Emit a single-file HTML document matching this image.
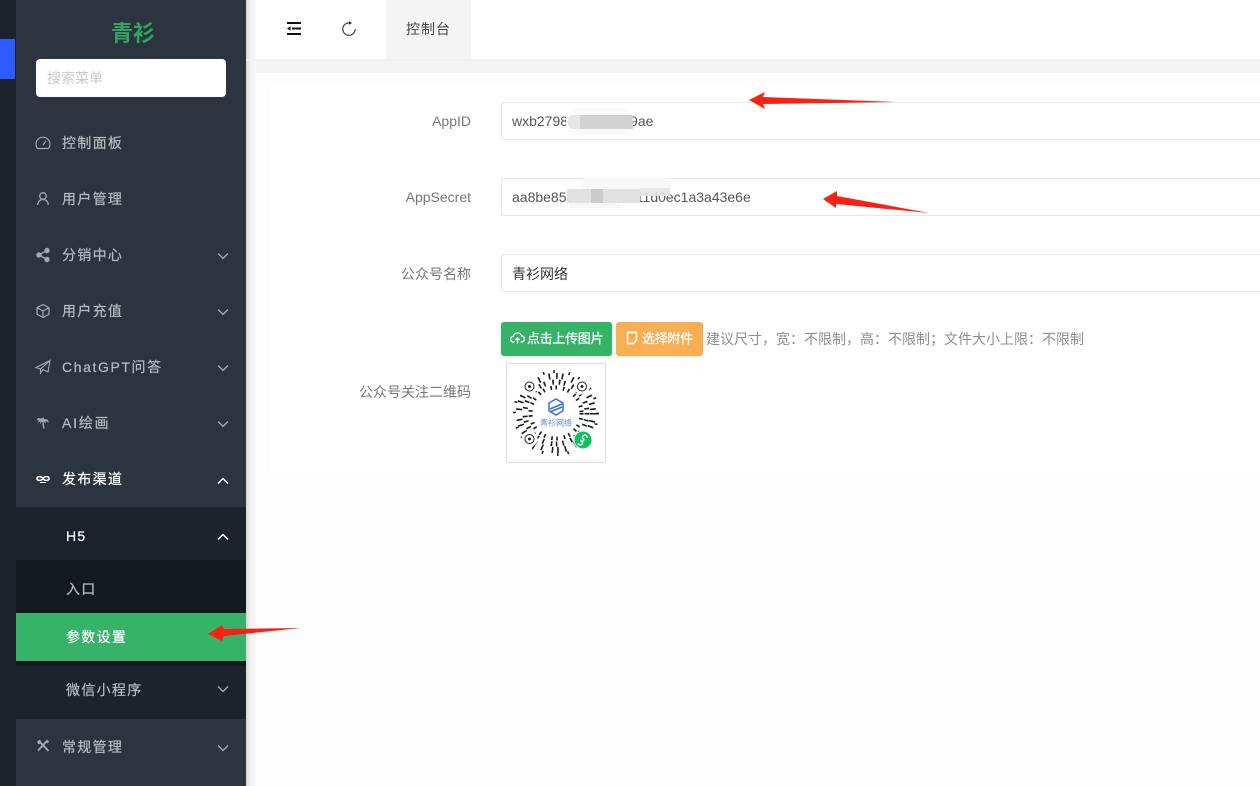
<!DOCTYPE html>
<html lang="zh"><head><meta charset="utf-8"><title>青衫</title>
<style>
*{box-sizing:border-box}
html,body{margin:0;padding:0}
body{width:1260px;height:786px;overflow:hidden;position:relative;background:#fdfdfd;font-family:"Liberation Sans","Noto Sans CJK SC",sans-serif;font-size:14px}
.a{position:absolute}
#rail{left:0;top:0;width:16px;height:786px;background:#1b222c}
#side{left:16px;top:0;width:230px;height:786px;background:#2b343f}
#shadow{left:246px;top:0;width:10px;height:786px;background:linear-gradient(90deg,#d8d8d8,#f0f0f0 40%,#f8f8f8)}
.m{position:absolute;left:16px;width:230px;height:20px;line-height:20px;color:#b8bcc0;letter-spacing:1.3px;white-space:nowrap;-webkit-text-stroke:.2px}
.m span{position:absolute;left:46px;top:0}
.m svg.i{position:absolute;left:19px;top:2px}
.m svg.c{position:absolute;left:200px;top:4px}
.w{color:#fff}
.lab{position:absolute;width:216px;left:255px;text-align:right;color:#777;line-height:20px;white-space:nowrap}
.inp{position:absolute;left:501px;width:780px;height:38px;border:1px solid #e8e8e8;border-radius:2px;background:#fff;color:#555;line-height:37px;padding-left:10px;white-space:nowrap}
.btn{position:absolute;top:322px;height:34px;border-radius:3px;color:#fff;font-size:13px;letter-spacing:-.3px;line-height:33px;white-space:nowrap;box-shadow:0 1px 2px rgba(0,0,0,.1);-webkit-text-stroke:.25px}
</style></head><body>
<div class="a" id="rail"></div>
<div class="a" style="left:0;top:39px;width:15px;height:40px;background:#2c5cff"></div>
<div class="a" id="side"></div>

<div class="a" style="left:16px;top:19px;width:234px;text-align:center;color:#2fa55f;font-size:22px;font-weight:700;line-height:30px">青衫</div>
<div class="a" style="left:36px;top:59px;width:190px;height:38px;background:#fff;border-radius:4px;color:#c8c8c8;line-height:39px;padding-left:11px">搜索菜单</div>

<div class="m" style="top:133px"><svg class="i" width="16" height="16" viewBox="0 0 16 16" fill="none" stroke="#a3aab2" stroke-width="1.200"><path d="M2.500 13.500A7 7 0 1 1 13.500 13.500Z"/><path d="M8 10L11 6"/></svg><span>控制面板</span></div>
<div class="m" style="top:189px"><svg class="i" width="16" height="16" viewBox="0 0 16 16" fill="none" stroke="#a3aab2" stroke-width="1.300"><circle cx="8" cy="5" r="3.300"/><path d="M2.700 14C3 10.500 5 8.500 8 8.500S13 10.500 13.300 14"/></svg><span>用户管理</span></div>
<div class="m" style="top:245px"><svg class="i" width="16" height="16" viewBox="0 0 16 16" fill="#a3aab2" stroke="#a3aab2"><circle cx="4" cy="8" r="2.200"/><circle cx="12" cy="3.500" r="2.200"/><circle cx="12" cy="12.500" r="2.200"/><path d="M4 8L12 3.500M4 8L12 12.500" stroke-width="1.300"/></svg><span>分销中心</span><svg class="c" width="14" height="14" viewBox="0 0 14 14" fill="none" stroke="#a9b0b6" stroke-width="1.300"><path d="M2 4.500L7 9.500L12 4.500"/></svg></div>
<div class="m" style="top:301px"><svg class="i" width="16" height="16" viewBox="0 0 16 16" fill="none" stroke="#a3aab2" stroke-width="1.200"><path d="M8 1.500L14 4.700V11.300L8 14.500L2 11.300V4.700ZM2 4.700L8 8L14 4.700M8 8V14.500"/></svg><span>用户充值</span><svg class="c" width="14" height="14" viewBox="0 0 14 14" fill="none" stroke="#a9b0b6" stroke-width="1.300"><path d="M2 4.500L7 9.500L12 4.500"/></svg></div>
<div class="m" style="top:357px"><svg class="i" width="16" height="16" viewBox="0 0 16 16" fill="none" stroke="#a3aab2" stroke-width="1.100"><path d="M15 1.500L1 8.500L5.500 10L15 1.500L13 13L8 10.500L5.500 14V10"/></svg><span style="letter-spacing:1.600px">ChatGPT问答</span><svg class="c" width="14" height="14" viewBox="0 0 14 14" fill="none" stroke="#a9b0b6" stroke-width="1.300"><path d="M2 4.500L7 9.500L12 4.500"/></svg></div>
<div class="m" style="top:413px"><svg class="i" width="16" height="16" viewBox="0 0 16 16" fill="#a3aab2"><path d="M7 3.500L3 3L1.500 5.500L4 5L2.500 8L5.500 6L5 9L7.300 6.500L8 13.500H9.500L8.500 6.500L11 8.500L10.500 6L14 7.500L12.500 4.500L9 4L8.500 2Z"/></svg><span style="letter-spacing:1.800px">AI绘画</span><svg class="c" width="14" height="14" viewBox="0 0 14 14" fill="none" stroke="#a9b0b6" stroke-width="1.300"><path d="M2 4.500L7 9.500L12 4.500"/></svg></div>
<div class="m w" style="top:469px"><svg class="i" width="16" height="16" viewBox="0 0 16 16" fill="none" stroke="#fff" stroke-width="1.600"><path d="M8 7.500C6.500 5 2 5 2 7.500S6.500 10 8 7.500C9.500 5 14 5 14 7.500S9.500 10 8 7.500Z"/><path d="M5 11.500H11" stroke-width="1"/></svg><span>发布渠道</span><svg class="c" width="14" height="14" viewBox="0 0 14 14" fill="none" stroke="#fff" stroke-width="1.500" style="top:5px"><path d="M2 9.500L7 4.500L12 9.500"/></svg></div>

<div class="a" style="left:16px;top:507px;width:230px;height:212px;background:#1c232d"></div>
<div class="a" style="left:16px;top:560px;width:230px;height:106px;background:#14191e;border-radius:2px"></div>
<div class="a" style="left:16px;top:613px;width:230px;height:48px;background:#36b368"></div>

<div class="m w" style="top:526px"><span style="left:50px">H5</span><svg class="c" width="14" height="14" viewBox="0 0 14 14" fill="none" stroke="#fff" stroke-width="1.500"><path d="M2 9.500L7 4.500L12 9.500"/></svg></div>
<div class="m" style="top:579px"><span style="left:50px">入口</span></div>
<div class="m w" style="top:627px"><span style="left:50px">参数设置</span></div>
<div class="m" style="top:680px"><span style="left:50px">微信小程序</span><svg class="c" width="14" height="14" viewBox="0 0 14 14" fill="none" stroke="#a9b0b6" stroke-width="1.300" style="top:2px"><path d="M2 4.500L7 9.500L12 4.500"/></svg></div>
<div class="m" style="top:737px"><svg class="i" width="16" height="16" viewBox="0 0 16 16" fill="none" stroke="#a3aab2" stroke-width="1.800" style="top:1px"><path d="M4.500 3.500L13.500 13M12 3L3 12.500"/><path d="M2.500 3.500L5 2L6 5L3.500 6Z" fill="#a3aab2" stroke-width=".6"/><path d="M11 2.500L13.500 4.500" stroke-width="2.200"/></svg><span>常规管理</span><svg class="c" width="14" height="14" viewBox="0 0 14 14" fill="none" stroke="#a9b0b6" stroke-width="1.300"><path d="M2 4.500L7 9.500L12 4.500"/></svg></div>

<div class="a" id="shadow"></div>

<div class="a" style="left:256px;top:0;width:1004px;height:59px;background:#fff"></div>
<div class="a" style="left:246px;top:59px;width:1014px;height:2px;background:#f1f1f1"></div>
<div class="a" style="left:256px;top:61px;width:1004px;height:12px;background:#f4f4f4"></div>
<div class="a" style="left:256px;top:73px;width:1004px;height:713px;background:#fdfdfd"></div>
<div class="a" style="left:271px;top:83px;width:989px;height:389px;background:#fff"></div>

<svg class="a" style="left:286px;top:21px" width="16" height="15" viewBox="0 0 16 15"><path d="M1 2H15M6 7.500H15M1 13H15" stroke="#111" stroke-width="2"/><path d="M1 7.500L4.500 5.300V9.700Z" fill="#111"/></svg>
<svg class="a" style="left:341px;top:21px" width="16" height="16" viewBox="0 0 16 16" fill="none" stroke="#444" stroke-width="1.200"><path d="M8 1.900A6.200 6.200 0 1 0 14.200 8"/><path d="M8 .3L11 2L8 3.800Z" fill="#222" stroke="none"/></svg>
<div class="a" style="left:386px;top:0;width:85px;height:59px;background:#f4f4f4;color:#444;padding-left:20px;letter-spacing:1px;line-height:58px">控制台</div>

<div class="lab" style="top:111px">AppID</div>
<div class="inp" style="top:102px">wxb2798<span style="margin-left:62px">9ae</span></div>
<div class="a" style="left:566px;top:108px;width:66px;height:26px;background:#fafafa;border-radius:10px"></div>
<div class="a" style="left:568px;top:115px;width:65px;height:14px;background:#e6e6e6;border-radius:5px"></div>
<div class="a" style="left:580px;top:115px;width:53px;height:14px;background:#d2d2d2"></div>

<div class="lab" style="top:187px">AppSecret</div>
<div class="inp" style="top:178px">aa8be853<span style="margin-left:48px"></span>1111d0ec1a3a43e6e</div>
<div class="a" style="left:580px;top:178px;width:92px;height:12px;background:#f8f8f8;border-radius:8px"></div>
<div class="a" style="left:567px;top:189px;width:73px;height:14px;background:#e1e1e1"></div>
<div class="a" style="left:640px;top:188px;width:30px;height:8px;background:#e4e4e4;opacity:.9"></div>
<div class="a" style="left:591px;top:189px;width:12px;height:14px;background:#cbcbcb"></div>
<div class="a" style="left:570px;top:203px;width:50px;height:5px;background:#f6f6f6"></div>

<div class="lab" style="top:264px">公众号名称</div>
<div class="inp" style="top:254px;color:#333;line-height:38px">青衫网络</div>

<div class="btn" style="left:501px;width:111px;background:#36b368;padding-left:26px"><svg class="a" style="left:9px;top:9px" width="15" height="14" viewBox="0 0 15 14" fill="none" stroke="#fff" stroke-width="1.300"><path d="M4.500 11H3.500A2.800 2.800 0 0 1 3.300 5.400A4.200 4.200 0 0 1 11.500 5A3 3 0 0 1 11.500 11H10.500"/><path d="M7.500 12.500V7M5.300 9L7.500 6.800L9.700 9"/></svg>点击上传图片</div>
<div class="btn" style="left:616px;width:87px;background:#f8ae52;padding-left:26px"><svg class="a" style="left:10px;top:9px" width="12" height="14" viewBox="0 0 12 14" fill="none" stroke="#fff" stroke-width="1.500"><path d="M1.500 1.500H10.500V9L7.500 12.500H1.500Z"/></svg>选择附件</div>
<div class="a" style="left:706px;top:329px;color:#8e8e8e;line-height:20px;white-space:nowrap">建议尺寸，宽：不限制，高：不限制；文件大小上限：不限制</div>

<div class="lab" style="top:382px;left:255px">公众号关注二维码</div>
<div class="a" style="left:506px;top:363px;width:100px;height:100px;border:1px solid #dcdcdc;border-radius:2px;background:#fff"></div>
<svg class="a" style="left:506px;top:363px" width="100" height="100" viewBox="0 0 100 100" fill="none">
<g stroke="#1a1a1a">
<circle cx="50" cy="50" r="25.500" stroke-width="4" stroke-dasharray="1.600 3.500 1.600 6"/>
<circle cx="50" cy="50" r="31" stroke-width="5" stroke-dasharray="1.600 5 1.600 3.500 1.600 7"/>
<circle cx="50" cy="50" r="37" stroke-width="6" stroke-dasharray="1.600 6 1.600 4 1.600 9"/>
<circle cx="50" cy="50" r="41.500" stroke-width="3" stroke-dasharray="1.500 9 1.500 14"/>
</g>
<g fill="#fff"><circle cx="23.500" cy="23.500" r="8"/><circle cx="76" cy="23.500" r="8"/><circle cx="23.500" cy="76" r="8"/></g>
<g stroke="#222" stroke-width="1"><circle cx="23.500" cy="23.500" r="4.500"/><circle cx="76" cy="23.500" r="4.500"/><circle cx="23.500" cy="76" r="4.500"/></g>
<g fill="#222"><circle cx="23.500" cy="23.500" r="1.500"/><circle cx="76" cy="23.500" r="1.500"/><circle cx="23.500" cy="76" r="1.500"/></g>
<circle cx="50" cy="50" r="21" fill="#fff"/>
<path d="M50 36L57 40V48L50 52L43 48V40ZM44 46L56 41M44 49L56 44" stroke="#3a6fe0" stroke-width="1.500"/>
<text x="50" y="62.500" text-anchor="middle" font-size="8" fill="#5a8ae6" font-family="Liberation Sans,Noto Sans CJK SC,sans-serif">青衫网络</text>
<circle cx="77" cy="77" r="9.500" fill="#fff"/>
<circle cx="77" cy="77" r="8.500" fill="#0fbf62"/>
<path d="M72.500 79.500A2.300 2.300 0 1 0 75.500 77V78A2.500 2.500 0 0 0 78.500 76A2.300 2.300 0 1 1 81.500 74.500" stroke="#fff" stroke-width="1.300" transform="translate(-.5 .5)"/>
</svg>

<svg class="a" style="left:200px;top:85px" width="740" height="560" viewBox="200 85 740 560">
<path fill="#fb2014" d="M749 100L765 92L763 97L895 102L763 104L765 109Z"/>
<path fill="#fb2014" d="M823 199L837 191L837 196L929 213L836 204L836 208Z"/>
<path fill="#fb2014" d="M208 634L222 625L224 629L301 628L224 636L222 641Z"/>
</svg>
</body></html>
